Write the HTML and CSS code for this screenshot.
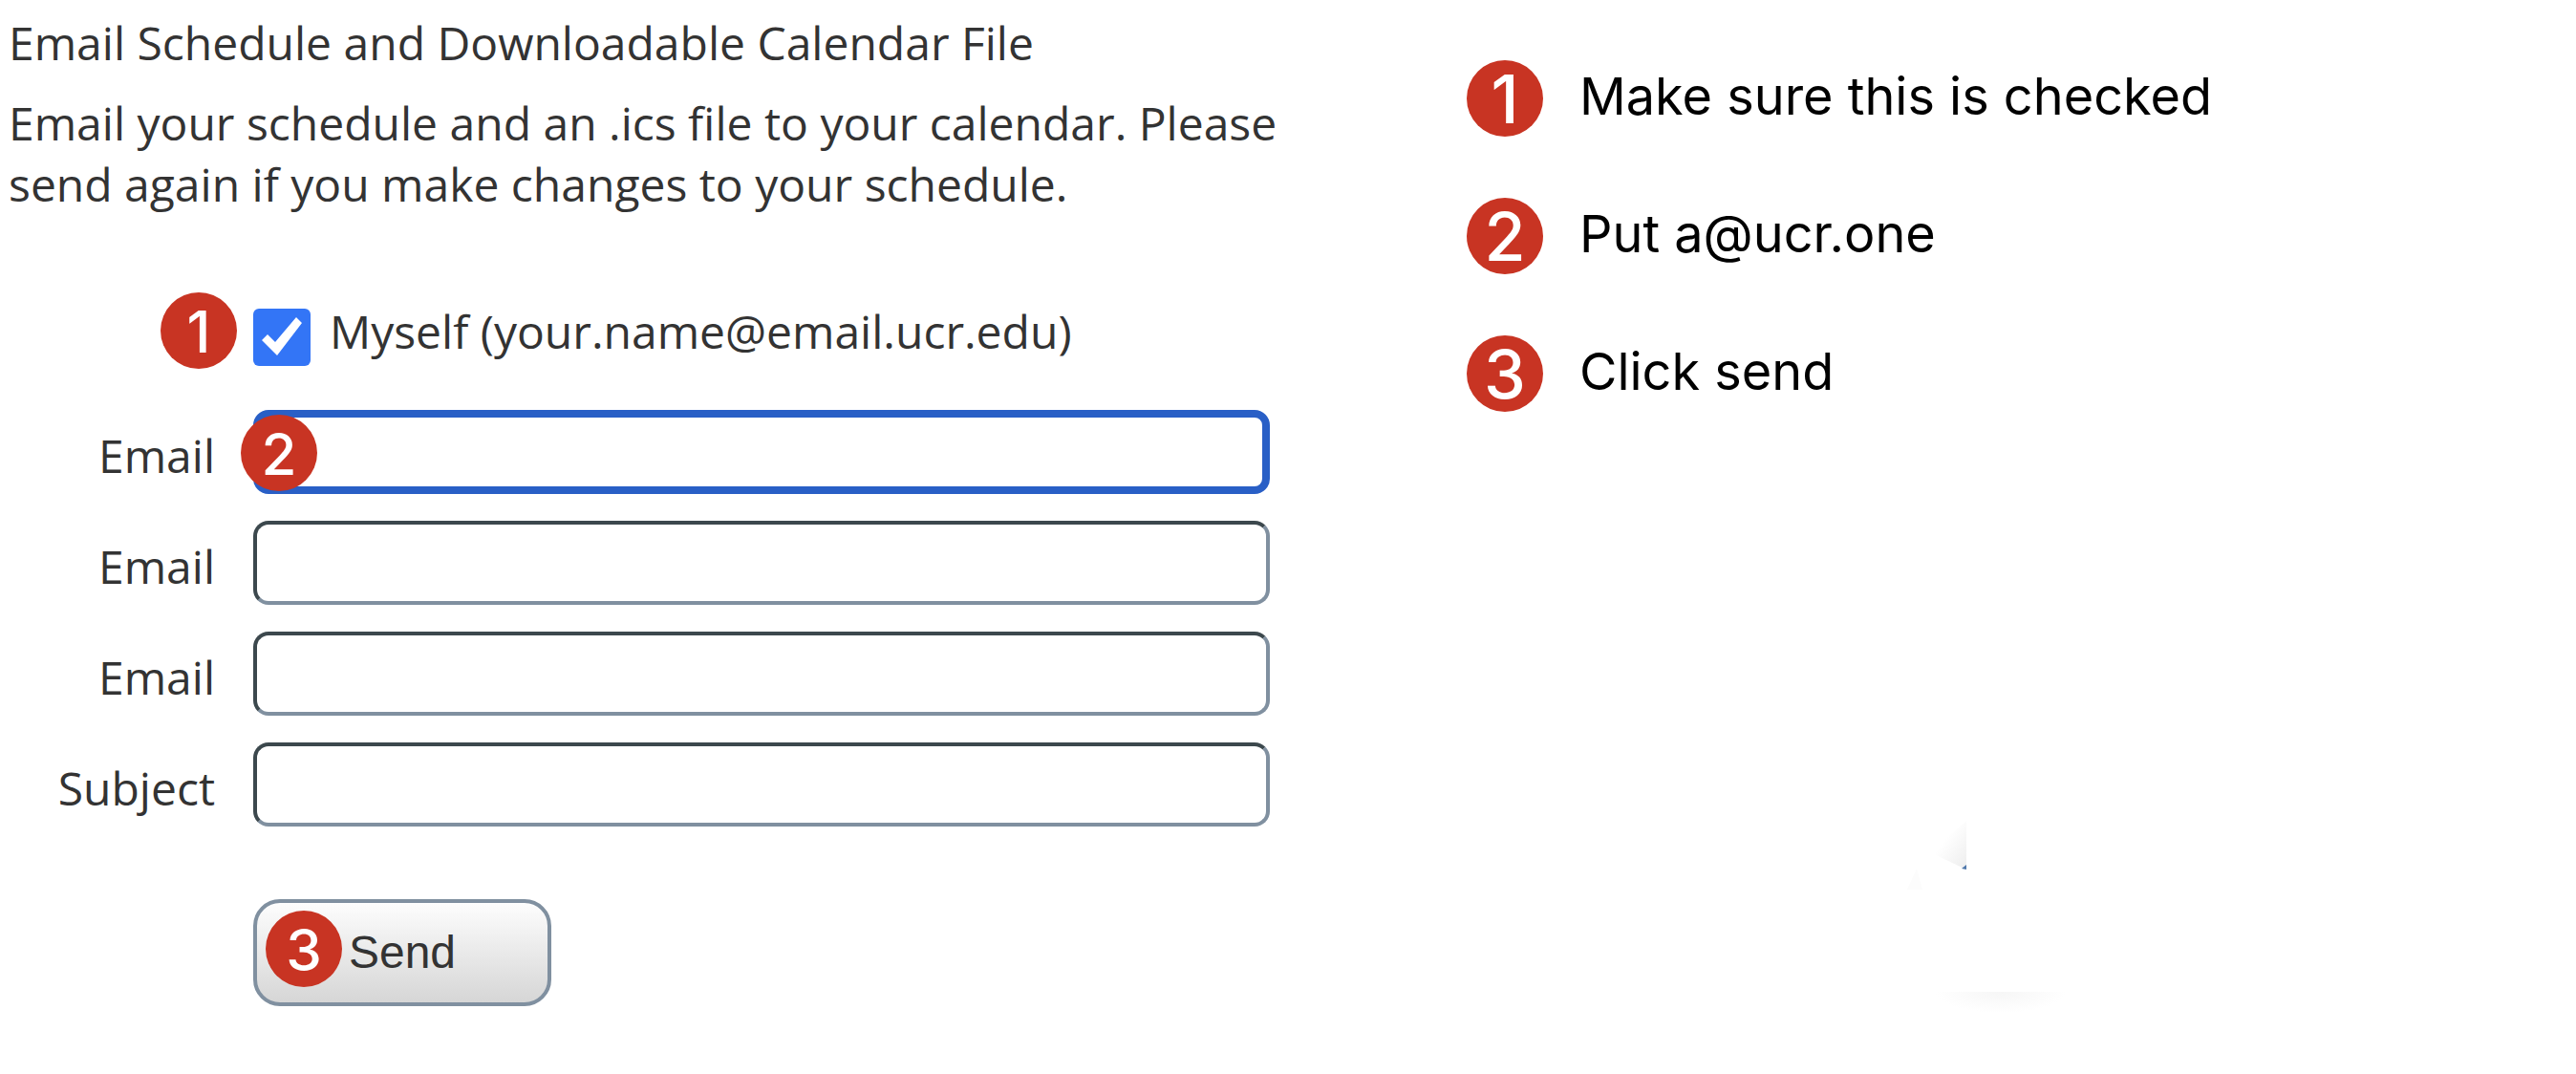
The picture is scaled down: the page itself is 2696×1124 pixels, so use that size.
FILE: index.html
```html
<!DOCTYPE html>
<html lang="en">
<head>
<meta charset="utf-8">
<title>Email Schedule</title>
<link rel="stylesheet" href="styles.css">
</head>
<body>
<main class="page">
  <section class="panel">
    <h1 class="title">Email Schedule and Downloadable Calendar File</h1>
    <p class="intro">Email your schedule and an .ics file to your calendar. Please send again if you make changes to your schedule.</p>
    <form class="form">
      <div class="myself">
        <span class="badge badge-check">1</span>
        <input class="check" type="checkbox" id="myself" checked>
        <label class="myself-label" for="myself">Myself (your.name@email.ucr.edu)</label>
      </div>
      <div class="row">
        <label class="label" for="email1">Email</label>
        <div class="control">
          <input class="field field-active" type="text" id="email1">
          <span class="badge badge-field">2</span>
        </div>
      </div>
      <div class="row">
        <label class="label" for="email2">Email</label>
        <input class="field" type="text" id="email2">
      </div>
      <div class="row">
        <label class="label" for="email3">Email</label>
        <input class="field" type="text" id="email3">
      </div>
      <div class="row">
        <label class="label" for="subject">Subject</label>
        <input class="field" type="text" id="subject">
      </div>
      <div class="actions">
        <button class="send" type="button">Send</button>
        <span class="badge badge-send">3</span>
      </div>
    </form>
  </section>
  <aside class="guide">
    <ol class="steps">
      <li class="step"><span class="badge badge-step">1</span><span>Make sure this is checked</span></li>
      <li class="step"><span class="badge badge-step">2</span><span>Put a@ucr.one</span></li>
      <li class="step"><span class="badge badge-step">3</span><span>Click send</span></li>
    </ol>
    <svg class="shade" width="180" height="220" viewBox="0 0 180 220" aria-hidden="true">
      <defs>
        <linearGradient id="corner" x1="0" y1="0" x2="1" y2="1">
          <stop offset="0.4" stop-color="#fff"/>
          <stop offset="1" stop-color="#ededed"/>
        </linearGradient>
        <radialGradient id="floor" cx="0.5" cy="0" r="0.5" gradientTransform="matrix(1 0 0 2 0 0)">
          <stop offset="0" stop-color="#f6f6f6"/>
          <stop offset="1" stop-color="#fff"/>
        </radialGradient>
      </defs>
      <path d="M24 33 62 0V51Z" fill="url(#corner)"/>
      <path d="M0 72 10 50 16 72Z" fill="#fcfcfc"/>
      <path d="M57 50 62 46V51Z" fill="#4f78ab"/>
      <rect x="30" y="179" width="136" height="22" fill="url(#floor)"/>
    </svg>
  </aside>
</main>
</body>
</html>
```
FILE: styles.css
```css
* {
  box-sizing: border-box;
}

body {
  margin: 0;
  background: #fff;
  color: #333;
  font: 48px/64px "Open Sans", sans-serif;
}

.page {
  display: grid;
  grid-template-columns: 1fr 1fr;
}

.panel {
  padding: 13px 10px 64px 9px;
}

.title {
  margin: 0 0 20px;
  font-size: 48px;
  font-weight: 400;
}

.intro {
  margin: 0 0 81px;
}

.form {
  display: flex;
  flex-direction: column;
  gap: 28px;
  padding-right: 9px;
}

.myself {
  position: relative;
  display: flex;
  align-items: center;
  gap: 20px;
  height: 80px;
  margin: 0 0 15px 256px;
}

.myself-label {
  padding-top: 2px;
}

.check {
  appearance: none;
  width: 60px;
  height: 60px;
  margin: 14px 0 0;
  border-radius: 6px;
  background: #3375f6;
}

.check:checked::before {
  content: "";
  display: block;
  width: 60px;
  height: 60px;
  background: #fff;
  clip-path: polygon(9px 33px, 15px 27px, 23px 35px, 45px 9px, 51px 15px, 25px 49px);
}

.row {
  display: grid;
  grid-template-columns: 216px 1fr;
  gap: 40px;
  align-items: center;
}

.label {
  padding-top: 8px;
  text-align: right;
}

.control,
.actions {
  position: relative;
}

.field {
  display: block;
  width: 100%;
  height: 88px;
  padding: 0 20px;
  border: 4px solid;
  border-color: #3c484d #8090a0 #8090a0 #3c484d;
  border-radius: 16px;
  background: #fff;
  font: inherit;
  color: inherit;
}

.field-active {
  border: 8px solid #295fc6;
}

.actions {
  margin: 48px 0 0 256px;
}

.send {
  display: block;
  width: 312px;
  height: 112px;
  padding: 0;
  border: 4px solid #8090a0;
  border-radius: 28px;
  background: linear-gradient(#fdfdfd, #d6d6d6);
  color: #333;
  font: 48px/64px "Liberation Sans", Arial, sans-serif;
}

.badge {
  flex: none;
  width: 80px;
  height: 80px;
  border-radius: 50%;
  background: #c83423;
  color: #fff;
  font: 500 60px/82px Inter, sans-serif;
  text-align: center;
}

.badge-check {
  position: absolute;
  top: 0;
  left: -97px;
}

.badge-field {
  position: absolute;
  top: 5px;
  left: -13px;
}

.badge-send {
  position: absolute;
  top: 12px;
  left: 13px;
}

.badge-step {
  font-size: 70px;
}

.guide {
  padding: 63px 24px 0 187px;
  color: #000;
  font: 54px/76px Inter, sans-serif;
}

.steps {
  display: flex;
  flex-direction: column;
  gap: 64px;
  margin: 0;
  padding: 0;
  list-style: none;
}

.step {
  display: flex;
  gap: 38px;
  height: 80px;
}

.shade {
  display: block;
  margin: 428px 0 0 461px;
}
```
